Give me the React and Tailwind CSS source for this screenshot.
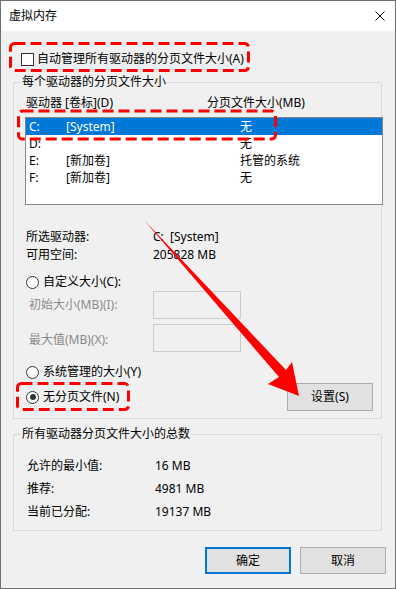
const font = { fontFamily: '"Noto Sans", "Noto Sans CJK SC", sans-serif' };

const drives = [
  { d: "C:", label: "[System]", size: "无", selected: true },
  { d: "D:", label: "", size: "无" },
  { d: "E:", label: "[新加卷]", size: "托管的系统" },
  { d: "F:", label: "[新加卷]", size: "无" },
];

function Radio({ checked, children, className = "" }) {
  return (
    <div className={`flex items-center gap-[4px] h-[16px] ${className}`}>
      <span className="w-[13px] h-[13px] rounded-full border border-[#333] bg-white flex items-center justify-center shrink-0">
        {checked && <span className="w-[6px] h-[6px] rounded-full bg-[#333]" />}
      </span>
      <span className="leading-[16px]">{children}</span>
    </div>
  );
}

function GroupBox({ title, className = "", children }) {
  return (
    <div className={`relative ml-[12px] w-[369px] border border-[#dcdcdc] ${className}`}>
      <span className="absolute left-[7px] -top-[9px] px-[1px] bg-[#f0f0f0] leading-[16px]">
        {title}
      </span>
      {children}
    </div>
  );
}

export default function App() {
  return (
    <div
      className="relative w-[396px] h-[589px] border border-[#6f6f6f] bg-[#f0f0f0] flex flex-col text-[12px] text-black overflow-hidden"
      style={font}
    >
      {/* title bar */}
      <div className="h-[30px] bg-white flex items-center justify-between pl-[8px] pr-[10px] shrink-0">
        <span className="leading-[16px]">虚拟内存</span>
        <svg width="10" height="10" viewBox="0 0 10 10">
          <path d="M0.5 0.5 L9.5 9.5 M9.5 0.5 L0.5 9.5" stroke="#000" strokeWidth="1" />
        </svg>
      </div>

      {/* auto manage */}
      <div className="mt-[20px] pl-[20px] h-[16px] flex items-center gap-[3px]">
        <span className="w-[13px] h-[13px] border border-[#333] bg-white shrink-0" />
        <span className="leading-[16px]">自动管理所有驱动器的分页文件大小(A)</span>
      </div>

      {/* per-drive group */}
      <GroupBox title="每个驱动器的分页文件大小" className="mt-[15px] pb-[7px]">
        <div className="mt-[12px] pl-[12px] h-[16px] flex items-center leading-[16px]">
          <span className="w-[181px]">驱动器 [卷标](D)</span>
          <span>分页文件大小(MB)</span>
        </div>

        <div className="mt-[6px] ml-[11px] w-[358px] h-[88px] border border-[#828790] bg-white">
          {drives.map((r) => (
            <div
              key={r.d}
              className={`h-[17px] flex items-center pl-[3px] leading-[17px] ${
                r.selected ? "bg-[#0078d7] text-white" : ""
              }`}
            >
              <span className="w-[37px]">{r.d}</span>
              <span className="w-[174px]">{r.label}</span>
              <span>{r.size}</span>
            </div>
          ))}
        </div>

        <div className="mt-[23px] pl-[12px]">
          <div className="h-[18px] flex items-center">
            <span className="w-[127px]">所选驱动器:</span>
            <span>C:&nbsp;&nbsp;[System]</span>
          </div>
          <div className="h-[18px] flex items-center">
            <span className="w-[127px]">可用空间:</span>
            <span>205828 MB</span>
          </div>

          <Radio className="mt-[10px]">自定义大小(C):</Radio>

          <div className="mt-[1px] h-[28px] flex items-center">
            <span className="w-[127px] pl-[3px] text-[#8a8a8a]">初始大小(MB)(I):</span>
            <span className="w-[88px] h-[28px] border border-[#cccccc] bg-[#f0f0f0]" />
          </div>
          <div className="mt-[5px] h-[28px] flex items-center">
            <span className="w-[127px] pl-[3px] pt-[3px] text-[#8a8a8a]">最大值(MB)(X):</span>
            <span className="w-[88px] h-[28px] border border-[#cccccc] bg-[#f0f0f0]" />
          </div>

          <Radio className="mt-[12px]">系统管理的大小(Y)</Radio>

          <div className="mt-[3px] h-[28px] flex items-center justify-between pr-[8px]">
            <Radio checked>无分页文件(N)</Radio>
            <button className="w-[86px] h-[28px] border border-[#adadad] bg-[#e1e1e1] flex items-center justify-center">
              设置(S)
            </button>
          </div>
        </div>
      </GroupBox>

      {/* totals group */}
      <GroupBox title="所有驱动器分页文件大小的总数" className="mt-[15px] pt-[19px] pb-[7px]">
        {[
          ["允许的最小值:", "16 MB"],
          ["推荐:", "4981 MB"],
          ["当前已分配:", "19137 MB"],
        ].map(([k, v]) => (
          <div key={k} className="h-[23px] pl-[13px] flex items-center">
            <span className="w-[128px]">{k}</span>
            <span>{v}</span>
          </div>
        ))}
      </GroupBox>

      {/* dialog buttons */}
      <div className="mt-[16px] pr-[9px] flex justify-end gap-[9px]">
        <button className="w-[86px] h-[27px] border-2 border-[#0078d7] bg-[#e1e1e1] flex items-center justify-center">
          确定
        </button>
        <button className="w-[86px] h-[27px] border border-[#adadad] bg-[#e1e1e1] flex items-center justify-center">
          取消
        </button>
      </div>

      {/* red annotations */}
      <svg
        className="absolute -left-[1px] -top-[1px] pointer-events-none"
        width="396"
        height="589"
        viewBox="0 0 396 589"
      >
        <g fill="none" stroke="#ff0000" strokeWidth="3" strokeDasharray="11 5">
          <rect x="10.5" y="43.5" width="238" height="27" rx="4" />
          <rect x="18.5" y="111" width="257" height="28" rx="4" />
          <rect x="17.5" y="383.5" width="111" height="26" rx="4" />
        </g>
        <polygon
          points="144,220 286,370 292,362 299,396 268,384 279,377"
          fill="#ff0000"
        />
      </svg>
    </div>
  );
}
